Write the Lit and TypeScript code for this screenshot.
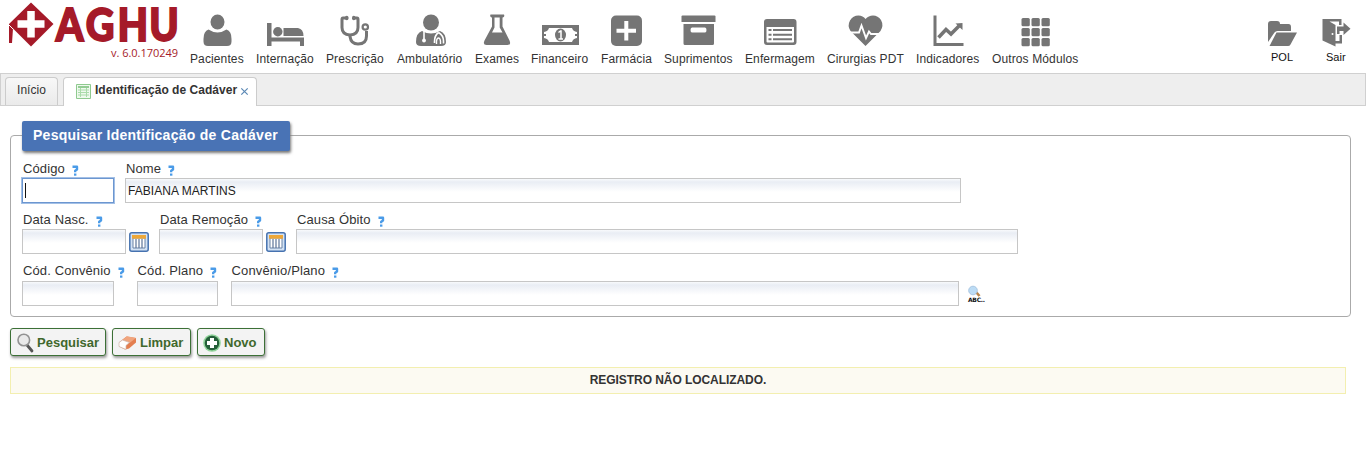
import { LitElement, html, svg, css, nothing } from "lit";
import { customElement } from "lit/decorators.js";
import { styleMap } from "lit/directives/style-map.js";

const G = "#757575";

// Toolbar icons share one coordinate space: x runs along the toolbar, y starts at its top.
const modules = [
  { label: "Pacientes", x: 190, w: 54, icon: svg`<ellipse cx="217.5" cy="22" rx="7" ry="7.6"/><path d="M208.5 29.5 Q217.5 35.5 226.5 29.5 Q231.6 31 231.5 39 V41.500 Q231.500 46 227 46 H208 Q203.500 46 203.500 41.500 V39 Q203.500 31 208.500 29.500Z"/>` },
  { label: "Internação", x: 256, w: 58, icon: svg`<path d="M267 23h4.500v14.500h32.500V46h-4v-4.500h-28.500V46H267z"/><circle cx="277.800" cy="31.800" r="4.700"/><path d="M283.500 28h14.500q5.500 1 5.500 8h-20z"/>` },
  { label: "Prescrição", x: 326, w: 59, icon: svg`<g fill="none" stroke=${G} stroke-width="3"><path d="M347 18h-4q-1 0-1 1.500v8q0 7 8 7.500q8-.5 8-7.500v-8q0-1.500-1-1.500h-4M350 35v1.500q1 7.500 8 7.500q8.500 0 8.500-8V31"/><circle cx="365.300" cy="27" r="2.700" stroke-width="2.200"/></g><rect x="345" y="15.800" width="3.500" height="4.500" rx="1.700"/><rect x="352" y="15.800" width="3.500" height="4.500" rx="1.700"/>` },
  { label: "Ambulatório", x: 397, w: 66, icon: svg`<circle cx="431" cy="22.500" r="8"/><path d="M422 31q9 5 18 0q6 2 6 11q0 4-5 4h-20q-5 0-5-4q0-9 6-11z"/><path d="M424 31v8M438.500 32.500q-4 3-4 9v1.500M438.500 32.500q5 3 5 8.500v2.500" fill="none" stroke="#fff" stroke-width="1.600"/><circle cx="424" cy="40.500" r="1.900" fill="#fff"/><path d="M436.500 44v-3q.5-3 2-3t2 3v3" fill="none" stroke="#fff" stroke-width="1.400"/>` },
  { label: "Exames", x: 475, w: 44, icon: svg`<path fill-rule="evenodd" d="M490.500 14.500h13.500q1 2-1 3h-.5v9l7 14q2 4.500-2 4.500h-21q-4 0-2-4.500l7.500-14v-9h-.5q-2-1-1-3zM494.500 17.500v10l-2.500 5h10.500l-2.800-5v-10z"/>` },
  { label: "Financeiro", x: 531, w: 58, icon: svg`<path d="M542 25h37v20h-37z"/><path d="M549 28h23q1 3.500 5 4v6q-4 .5-5 4h-23q-1-3.500-5-4v-6q4-.5 5-4z" fill="#fff"/><path d="M542 34v2h4v-2zM575 34v2h4v-2z"/><ellipse cx="560.500" cy="35" rx="5.500" ry="6.500"/><path d="M558.500 32.500l2-1.500h.5v7.500M558.500 39h4.500" stroke="#fff" stroke-width="1.500" fill="none"/>` },
  { label: "Farmácia", x: 601, w: 51, icon: svg`<rect x="611" y="15.500" width="31" height="30.500" rx="5"/><path d="M616.500 30.700h19.500M626.300 21v19.500" stroke="#fff" stroke-width="4"/>` },
  { label: "Suprimentos", x: 664, w: 69, icon: svg`<path d="M682.500 15.500h32q1 0 1 1v5.500h-34v-5.500q0-1 1-1z"/><path fill-rule="evenodd" d="M683.500 24h30.500v19.500q0 1.500-1.500 1.500h-27.500q-1.500 0-1.500-1.500zM692 27.500q-1.500 0-1.500 2.500t1.500 2.500h13q1.500 0 1.500-2.500t-1.500-2.500z"/>` },
  { label: "Enfermagem", x: 745, w: 70, icon: svg`<path fill-rule="evenodd" d="M767 19h26.500q3 0 3 3v20q0 3-3 3H767q-3 0-3-3V22q0-3 3-3zM766.500 27v14.500q0 1 1 1h25.500q1 0 1-1V27z"/><path d="M768.500 30h3m1.500 0h19M768.500 34.700h3m1.500 0h19M768.500 39.300h3m1.500 0h19" stroke=${G} stroke-width="2.100"/>` },
  { label: "Cirurgias PDT", x: 827, w: 77, icon: svg`<path d="M865.500 46l-15-15q-3.500-5-.5-10.500q3-5 8.500-5q4.500 0 7 3.500q3-3.500 7.500-3.500q5 0 8 4.500q3 5.500-.5 11z"/><path d="M849 32.500h10l2.500-7 4.500 12.500 3-6.500 2 2.500h12" fill="none" stroke="#fff" stroke-width="1.900"/>` },
  { label: "Indicadores", x: 916, w: 64, icon: svg`<path d="M933.500 15.500h3V43h27v3h-30z"/><path d="M938.500 37.500l7.500-8 5 4.500 8-8" fill="none" stroke=${G} stroke-width="3.500"/><path d="M955.500 23.500l7-.5v7z"/>` },
  { label: "Outros Módulos", x: 992, w: 86, icon: svg`${[0, 10, 20].map(y => [0, 10, 20].map(x => svg`<rect x=${1021.500 + x} y=${18 + y} width="8.300" height="8.200" rx="1.500"/>`))}` },
];

const actions = [
  { label: "POL", x: 1271, w: 22, icon: svg`<path d="M1268 42V24q0-3 3-3h6q3 0 3 3h8.500q2.500 0 2.500 3v4h-13.500q-2 0-3 1.500z"/><path d="M1276.500 32.500H1297l-6.500 12q-.8 1.500-2.500 1.500h-18.500z"/>` },
  { label: "Sair", x: 1326, w: 19, icon: svg`<path d="M1322.500 19h19v6H1339v-3.500h-9.500l6 3.500v16h4v-6h2.500v8.500h-6.500v3L1322.500 40.500z"/><path d="M1337 26.500h6.500V22.500l7 6.200-7 6.300v-4h-4v3H1337z"/><circle cx="1332.500" cy="34" r="1" fill="#fff"/>` },
];

@customElement("app-root")
export class AppRoot extends LitElement {
  static styles = css`
    :host { display: block; width: 1366px; height: 461px; overflow: hidden; background: #fff; color: #333; font: 12px/14px "Liberation Sans", Arial, sans-serif; box-sizing: border-box; }
    * { box-sizing: border-box; }
    svg { display: block; overflow: visible; flex: none; }
    .top { display: flex; height: 73px; }
    .logo { width: 190px; }
    .brand { font: 900 45px Lato, sans-serif; fill: #a51a29; stroke: #a51a29; stroke-width: 1.8px; }
    .version { font: 11px "Open Sans", sans-serif; fill: #a51a29; }
    .modules { display: flex; gap: 12px; width: 1081px; padding-top: 10px; white-space: nowrap; letter-spacing: .12px; }
    .module svg { margin-bottom: 4px; }
    .actions { display: flex; gap: 33px; padding-top: 10px; font-size: 11px; color: #111; white-space: nowrap; }
    .actions svg { margin-bottom: 2px; }
    .tabs { height: 33px; display: flex; gap: 5px; align-items: flex-end; padding-left: 4px; border: 1px solid #d0d0d0; background: #eee; }
    .tab { height: 28px; width: 53px; display: flex; align-items: center; border: 1px solid #ccc; border-bottom: 0; border-radius: 4px 4px 0 0; background: linear-gradient(#f8f8f8, #eaeaea); padding: 0 0 4px 11px; white-space: nowrap; letter-spacing: .05px; }
    .tab.active { height: 29px; width: 194px; margin-bottom: -1px; background: #fff; font-weight: bold; padding: 0 0 5px 12px; letter-spacing: .03px; }
    .tab-icon { margin: 4px 4px 0 0; }
    .close { margin: 3px 0 0 4px; }
    .panel { margin: 29px 15px 0 10px; height: 182px; border: 1px solid #aaa; border-radius: 4px; padding-left: 11px; }
    .legend { width: 268px; height: 30px; margin-top: -15px; padding-left: 11px; border-radius: 2px; background: #4973b5; box-shadow: 1px 2px 3px #777; color: #fff; font: bold 14px/28px "Liberation Sans", Arial, sans-serif; letter-spacing: .27px; white-space: nowrap; }
    .rows { padding-top: 11px; display: grid; grid-template-rows: 51px 51px 51px; }
    .row { display: flex; }
    .label { height: 16px; padding-left: 1px; display: flex; font-size: 13px; line-height: 13px; letter-spacing: .12px; white-space: nowrap; }
    .row.last .label { height: 17px; }
    .help { margin: 3px 0 0 7px; }
    .line { display: flex; gap: 3px; align-items: center; }
    .input { height: 25px; border: 1px solid #c6c6c6; background: linear-gradient(#f8fafc 0, #e9edf4 3px, #fff 13px); padding: 1px 0 0 2px; line-height: 23px; color: #222; letter-spacing: .05px; }
    .input.focus { border: 1px solid #6c96d0; box-shadow: 0 0 0 1px #a3c0e6; background: #fff; padding: 4px 0 0 2px; }
    .caret { width: 1px; height: 15px; background: #111; }
    .buttons { display: flex; gap: 6px; margin: 11px 0 0 10px; }
    .button { height: 28px; display: flex; align-items: center; border: 1px solid #3c7036; border-radius: 3px; background: #f3f3f3; box-shadow: 1px 2px 3px #999; color: #3f682c; font: bold 13px/16px "Liberation Sans", Arial, sans-serif; padding: 2px 0 0 5px; gap: 3px; white-space: nowrap; }
    .button svg { margin-top: -1px; }
    .message { margin: 11px 20px 0 10px; height: 27px; border: 1px solid #f3efb0; background: #fcfaf2; text-align: center; font-weight: bold; line-height: 24px; letter-spacing: -.06px; }
  `;

  private item(m: any) {
    return html`<div class="module" style=${styleMap({ width: m.w + "px" })}><svg width=${m.w} height="38" viewBox="${m.x} 10 ${m.w} 38" fill=${G}>${m.icon}</svg>${m.label}</div>`;
  }

  private field(label: string, w: number, gap: number, opts: { value?: string; focus?: boolean; after?: unknown } = {}) {
    return html`<div style=${styleMap({ marginRight: gap + "px" })}>
      <div class="label">${label}<svg class="help" width="7" height="11" viewBox="0 0 7 11"><path d="M.5 1.800h4.500v2.700L3.200 5.700v1.500" fill="none" stroke="#4a9be8" stroke-width="2.400" stroke-linejoin="round"/><path d="M2 8.500h2.400v2.200H2z" fill="#4a9be8"/></svg></div>
      <div class="line"><div class="input ${opts.focus ? "focus" : ""}" style=${styleMap({ width: w + "px" })}>${opts.focus ? html`<div class="caret"></div>` : opts.value ?? nothing}</div>${opts.after ?? nothing}</div>
    </div>`;
  }

  private calendar() {
    return html`<svg width="20" height="20" viewBox="0 0 20 20"><rect x=".8" y=".8" width="18.400" height="18.400" rx="2" fill="#d3e2f4" stroke="#4672b0" stroke-width="1.500"/><path d="M4 6h12v10H4z" fill="#fff" stroke="#6b83a6"/><path d="M7 7v9M10 7v9M13 7v9" stroke="#5d7599" stroke-width="1.200"/><path d="M3 3h14v3.700H3z" fill="#eda738"/></svg>`;
  }

  render() {
    return html`
      <div class="top">
        <svg class="logo" width="190" height="73" viewBox="0 0 190 73">
          <path d="M31 2.500L53.500 24 31 46.500 13 28.500 12 43H9V24z" fill="#a51a29"/><path d="M9 25l4 4" stroke="#fff"/>
          <path d="M17.500 24h27M31 11v26.500" stroke="#fff" stroke-width="7.500"/>
          <text class="brand" transform="scale(.88 1)" x="63.500 97.500 133.500 169.500" y="40.500">AGHU</text>
          <text class="version" x="111" y="57" textLength="67">v. 6.0.170249</text>
        </svg>
        <div class="modules">${modules.map(m => this.item(m))}</div>
        <div class="actions">${actions.map(m => this.item(m))}</div>
      </div>
      <div class="tabs">
        <div class="tab">Início</div>
        <div class="tab active">
          <svg class="tab-icon" width="15" height="15" viewBox="0 0 15 15"><path d="M.5.500h14v14H.5z" fill="#eef9ed" stroke="#8fca8f"/><path d="M2 3h11" stroke="#74bd76" stroke-width="1.500"/><path d="M2 6h11M2 8.500h11M2 11h11M4.500 4v9M10.500 4v9" stroke="#a9dba9"/></svg>
          Identificação de Cadáver
          <svg class="close" width="7" height="7" viewBox="0 0 7 7"><path d="M.3.300l6.400 6.400M6.700.300L.3 6.700" stroke="#5b88b5" stroke-width="1.200"/></svg>
        </div>
      </div>
      <div class="panel">
        <div class="legend">Pesquisar Identificação de Cadáver</div>
        <div class="rows">
          <div class="row">${this.field("Código", 92, 11, { focus: true })}${this.field("Nome", 836, 0, { value: "FABIANA MARTINS" })}</div>
          <div class="row">${this.field("Data Nasc.", 104, 10, { after: this.calendar() })}${this.field("Data Remoção", 104, 10, { after: this.calendar() })}${this.field("Causa Óbito", 722, 0)}</div>
          <div class="row last">${this.field("Cód. Convênio", 92, 12, {})}${this.field("Cód. Plano", 81, 13)}${this.field("Convênio/Plano", 728, 0, {
            after: html`<svg width="24" height="20" viewBox="963 283 24 20"><path d="M977 291l3.500 4" stroke="#b98449" stroke-width="2.600"/><circle cx="974" cy="289.500" r="4.300" fill="#bcdcf5" stroke="#a9c6e2"/><text x="969" y="301" font-size="6" font-weight="bold" fill="#111" textLength="17" font-family="DejaVu Sans, sans-serif">ABC..</text></svg>`,
          })}</div>
        </div>
      </div>
      <div class="buttons">
        <div class="button" style=${styleMap({ width: "96px" })}><svg width="18" height="20" viewBox="0 0 18 20"><path d="M11 12l5 6" stroke="#555" stroke-width="2.800" stroke-linecap="round"/><circle cx="7.800" cy="7" r="5.800" fill="#e9e9e9" stroke="#929292" stroke-width="1.600"/></svg>Pesquisar</div>
        <div class="button" style=${styleMap({ width: "79px" })}><svg width="19" height="18" viewBox="0 0 19 18"><path d="M1 8.500L8.500 2.500 18 4v4.500L11 14.500 7 15.500 1 12.500z" fill="#e37e4f"/><path d="M4 6L9 2.300 18 4l-6.500 5z" fill="#f0a57e"/><path d="M1 8.500L4.500 6l7 2.500-3.500 3V15.500L1 12.500z" fill="#fff" stroke="#cdb5aa" stroke-width=".7"/></svg>Limpar</div>
        <div class="button" style=${styleMap({ width: "68px" })}><svg width="18" height="18" viewBox="0 0 18 18"><circle cx="9" cy="9" r="8.800" fill="#91d49b"/><circle cx="9" cy="9" r="7.300" fill="#25603a"/><path d="M4 9h10M9 4v10" stroke="#fff" stroke-width="4"/></svg>Novo</div>
      </div>
      <div class="message">REGISTRO NÃO LOCALIZADO.</div>
    `;
  }
}
